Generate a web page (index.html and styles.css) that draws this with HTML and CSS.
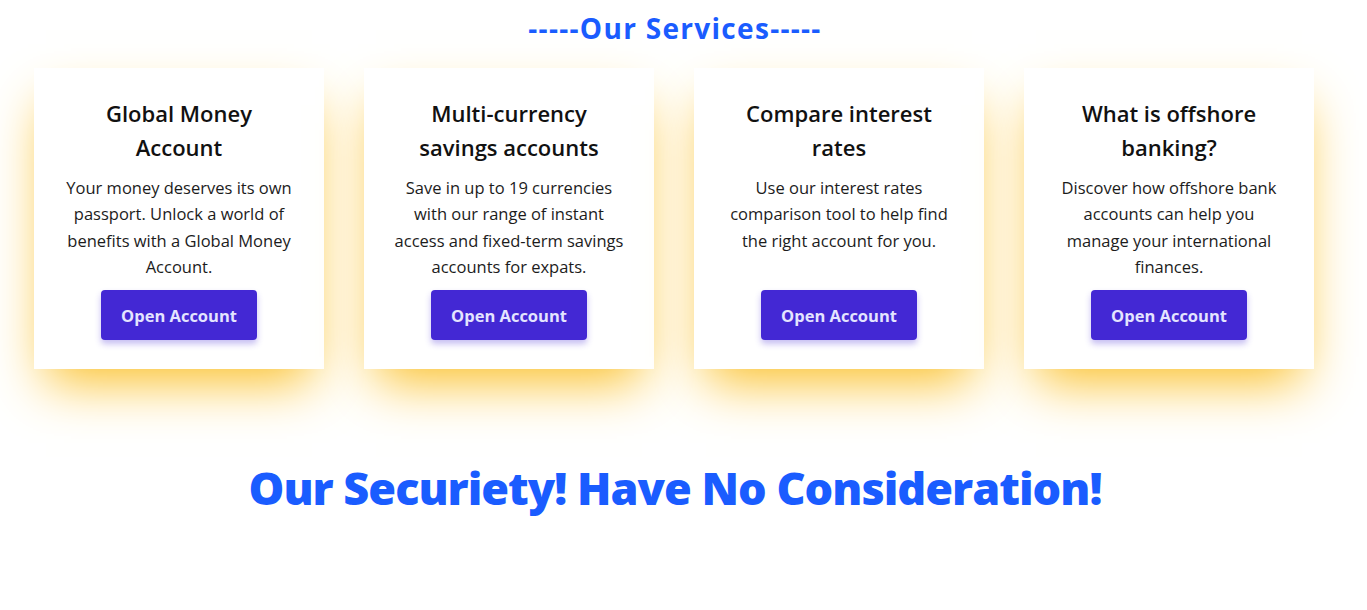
FILE: index.html
```html
<!DOCTYPE html>
<html lang="en">
<head>
<meta charset="utf-8">
<title>Our Services</title>
<link rel="stylesheet" href="styles.css">
</head>
<body>
  <section class="services">
    <h2 class="services-title">-----Our Services-----</h2>
    <div class="cards">
      <div class="card">
        <h3 class="card-title">Global Money Account</h3>
        <p class="card-text">Your money deserves its own passport. Unlock a world of benefits with a Global Money Account.</p>
        <button class="btn">Open Account</button>
      </div>
      <div class="card">
        <h3 class="card-title">Multi-currency savings accounts</h3>
        <p class="card-text">Save in up to 19 currencies with our range of instant access and fixed-term savings accounts for expats.</p>
        <button class="btn">Open Account</button>
      </div>
      <div class="card">
        <h3 class="card-title">Compare interest rates</h3>
        <p class="card-text">Use our interest rates comparison tool to help find the right account for you.</p>
        <button class="btn">Open Account</button>
      </div>
      <div class="card">
        <h3 class="card-title">What is offshore banking?</h3>
        <p class="card-text">Discover how offshore bank accounts can help you manage your international finances.</p>
        <button class="btn">Open Account</button>
      </div>
    </div>
  </section>
  <section class="security">
    <h1 class="security-title">Our Securiety! Have No Consideration!</h1>
  </section>
</body>
</html>
```

FILE: styles.css
```css
body {
  margin: 0;
  padding-right: 17px;
  background: #ffffff;
  font-family: "Open Sans", "Noto Sans", sans-serif;
  color: #1c1c1c;
}
.services-title {
  margin: 10px 0 0;
  text-align: center;
  font-size: 28px;
  line-height: 37px;
  font-weight: 700;
  letter-spacing: 1.3px;
  color: #1a5cff;
}
.cards {
  display: flex;
  gap: 40px;
  padding-left: 34px;
  margin-top: 21px;
}
.card {
  width: 290px;
  box-sizing: border-box;
  padding: 28px 29px 29px;
  background: #ffffff;
  box-shadow: 0 25px 50px -12px #fbbf24;
  display: flex;
  flex-direction: column;
  align-items: center;
  text-align: center;
}
.card-title {
  margin: 0;
  max-width: 200px;
  font-size: 22px;
  line-height: 34px;
  font-weight: 600;
  color: #111111;
}
.card-text {
  margin: 11px 0 10px;
  font-size: 16.5px;
  line-height: 26.3px;
  color: #1c1c1c;
}
.btn {
  margin-top: auto;
  flex-shrink: 0;
  width: 156px;
  height: 50px;
  border: none;
  border-radius: 4px;
  background: #4328d4;
  color: #e4e4ff;
  font-family: inherit;
  font-size: 16.5px;
  font-weight: 700;
  box-shadow: 0 4px 6px rgba(67, 40, 212, 0.3);
  cursor: pointer;
}
.security {
  margin-top: 90px;
  padding-bottom: 120px;
}
.security-title {
  margin: 0;
  text-align: center;
  font-size: 45px;
  line-height: 58px;
  font-weight: 800;
  letter-spacing: -1px;
  color: #1a5cff;
}
```
